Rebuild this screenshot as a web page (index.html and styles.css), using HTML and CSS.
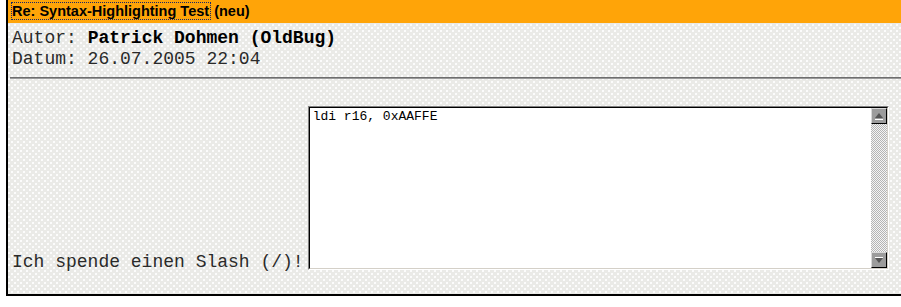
FILE: index.html
```html
<!DOCTYPE html>
<html lang="de">
<head>
  <meta charset="UTF-8">
  <title>Re: Syntax-Highlighting Test</title>
  <link rel="stylesheet" href="styles.css">
</head>
<body>

<div class="post">
  <div class="post-head"><a class="subject" href="#">Re: Syntax-Highlighting Test</a> (neu)</div>

  <div class="post-meta">
    Autor: <b>Patrick Dohmen (OldBug)</b><br>
    Datum: 26.07.2005 22:04
  </div>

  <hr class="sep">

  <div class="post-body">
    <span class="sig">Ich spende einen Slash (/)!</span>
    <div class="codebox">
      <div class="codebox-inner">
        <textarea class="code" readonly>ldi r16, 0xAAFFE</textarea>
        <div class="scroll">
          <div class="scroll-btn">
            <svg width="14" height="14" viewBox="0 0 14 14"><path d="M3 9 L7 4 L11 9 Z" fill="#555"/><rect x="3" y="10" width="8" height="1" fill="#fff"/></svg>
          </div>
          <div class="scroll-track"></div>
          <div class="scroll-btn">
            <svg width="14" height="14" viewBox="0 0 14 14"><rect x="3" y="4" width="8" height="1" fill="#fff"/><path d="M3 5 L11 5 L7 10 Z" fill="#555"/></svg>
          </div>
        </div>
      </div>
    </div>
  </div>
</div>

</body>
</html>
```

FILE: styles.css
```css
html, body { background: #fff; }
body { margin: 0 0 0 6px; overflow: hidden; }

.post {
  border-left: 2px solid #000;
  border-bottom: 2px solid #000;
  background-color: #eaeae7;
  background-image:
    radial-gradient(circle at 1px 1px, #fbfbfb 0.7px, transparent 1.1px),
    radial-gradient(circle at 1px 1px, #fbfbfb 0.7px, transparent 1.1px);
  background-size: 6px 6px, 6px 6px;
  background-position: 0 0, 3px 3px;
}

.post-head { background: #ffa408; height: 23px; padding: 0 4px; font: bold 14.5px/23px "Liberation Sans", Arial, sans-serif; color: #000; }
.subject { color: #000; text-decoration: none; outline: 1px dotted #1a2a6a; outline-offset: 0; padding: 0 1px 0 0; }

.post-meta { padding: 5px 4px 0; font: 18px/21px "Liberation Mono", "Courier New", monospace; color: #2a2a2a; }
.post-meta b { color: #000; }

.sep { margin: 7px 0 0 2px; height: 0; border: none; border-top: 1px solid #6e6e6e; border-bottom: 1px solid #9a9a9a; }

.post-body { display: flex; align-items: flex-end; gap: 4px; padding: 27px 0 21px 4px; }
.sig { font: 18px/21px "Liberation Mono", "Courier New", monospace; color: #2a2a2a; white-space: nowrap; }

.codebox { margin-bottom: 3px; border: 1px solid; border-color: #808080 #fff #fff #808080; }
.codebox-inner { display: flex; width: 577px; height: 160px; border: 1px solid; border-color: #000 #d4d0c8 #d4d0c8 #000; background: #fff; }

.code { flex: 1; margin: 0; border: none; padding: 1px 3px; resize: none; overflow: hidden; background: #fff; color: #000; font: 13px/15px "Liberation Mono", "Courier New", monospace; outline: none; }

.scroll { width: 16px; display: flex; flex-direction: column; }
.scroll-btn { height: 14px; display: flex; align-items: center; justify-content: center; background: #9c9c9c; border: 1px solid; border-color: #d8d8d8 #000 #000 #d8d8d8; }
.scroll-track { flex: 1; background: repeating-conic-gradient(#b4b4b4 0 25%, #f4f4f4 0 50%) 0 0 / 2px 2px; }
```
